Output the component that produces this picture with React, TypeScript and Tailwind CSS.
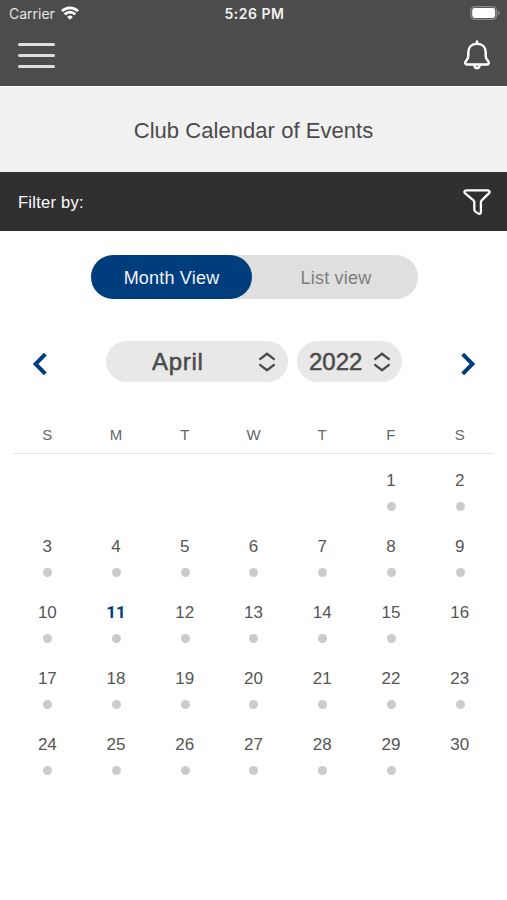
import React, { useState } from 'react';

type CalendarView = 'month' | 'list';

const WEEKDAYS = ['S', 'M', 'T', 'W', 'T', 'F', 'S'];
const FIRST_WEEKDAY = 5;
const DAYS_IN_MONTH = 30;
const TODAY = 11;
const DAYS_WITHOUT_EVENTS = [16, 30];

const StatusBar: React.FC = () => (
  <div className="grid h-7 grid-cols-3 items-center pl-[9px] pr-[7px] font-['Inter',sans-serif] leading-none text-[#e6e6e6]">
    <div className="flex items-center gap-[6px]">
      <span className="text-sm">Carrier</span>
      <svg className="-mt-0.5" width="18" height="14" viewBox="0 0 18 14" fill="none" stroke="#fff" strokeWidth="2.7">
        <path d="M1 5.1a11.4 11.4 0 0 1 16 0" />
        <path d="M3.7 8.4a7.4 7.4 0 0 1 10.6 0" />
        <path d="M6.2 10.9a4 4 0 0 1 5.6 0L9 13.8z" fill="#fff" stroke="none" />
      </svg>
    </div>
    <span className="text-center text-sm font-semibold leading-none tracking-[0.5px] text-[#f2f2f2]">5:26 PM</span>
    <svg className="-mt-0.5 ml-auto" width="30" height="14" viewBox="0 0 30 14" fill="none">
      <rect x="0.8" y="0.6" width="25.8" height="12.8" rx="4" stroke="#8b8b8b" strokeWidth="1.2" />
      <rect x="2.2" y="2" width="23" height="10" rx="2.4" fill="#fff" />
      <path d="M28 4.8c1.2.3 1.7 1.2 1.7 2.2s-.5 1.9-1.7 2.2z" fill="#8b8b8b" />
    </svg>
  </div>
);

const SortArrows: React.FC = () => (
  <svg width="18" height="20" viewBox="0 0 18 20" fill="none" stroke="#4a4a4a" strokeWidth="2.3">
    <path d="M1.4 7.6 9 1.8l7.6 5.8M1.4 12.4 9 18.2l7.6-5.8" />
  </svg>
);

const App: React.FC = () => {
  const [view, setView] = useState<CalendarView>('month');

  const cells: (number | null)[] = [
    ...Array(FIRST_WEEKDAY).fill(null),
    ...Array.from({ length: DAYS_IN_MONTH }, (_, i) => i + 1)
  ];

  return (
    <div className="min-h-screen w-full bg-white font-['Liberation_Sans',Arial,sans-serif] text-[#4a4a4a]">
      <header className="h-[86px] bg-[#4c4c4c]">
        <StatusBar />
        <div className="flex h-[56px] items-center justify-between pl-[18px] pr-4">
          <button aria-label="Menu" className="-mt-px flex w-[37px] flex-col gap-2">
            <span className="h-[3px] rounded-full bg-[#dedede]" />
            <span className="h-[3px] rounded-full bg-[#dedede]" />
            <span className="h-[3px] rounded-full bg-[#dedede]" />
          </button>
          <button aria-label="Notifications" className="-mt-0.5">
            <svg width="28" height="30" viewBox="0 0 28 30" fill="none" stroke="#fff" strokeWidth="2.5" strokeLinecap="round" strokeLinejoin="round">
              <path d="M14 1.6v2" />
              <path d="M14 3.8c-5.300 0-8.700 3.500-8.700 8.400v3.600c0 2.200-.7 3.600-2.200 5.100-1.500 1.500-1 3.700 1 3.700h19.800c2 0 2.500-2.200 1-3.700-1.500-1.500-2.200-2.900-2.200-5.100v-3.600c0-4.900-3.400-8.400-8.700-8.400z" />
              <path d="M11.500 25c0 4.200 5 4.200 5 0" />
            </svg>
          </button>
        </div>
      </header>

      <div className="flex h-[86px] items-center justify-center border-t border-white bg-[#f1f1f1] pt-[2px]">
        <h1 className="text-[22px] leading-none tracking-[0.05px]">Club Calendar of Events</h1>
      </div>

      <div className="flex h-[59px] items-center justify-between bg-[#303030] pl-[18px] pr-4 text-white">
        <span className="pt-0.5 text-[16.5px] tracking-[0.25px]">Filter by:</span>
        <button aria-label="Filter">
          <svg width="28" height="28" viewBox="0 0 28 28" fill="none" stroke="#fff" strokeWidth="2.3" strokeLinejoin="round">
            <path d="M3.400 2.400h21.200c2 0 2.600 1.700 1.200 3l-7.100 7c-.5.5-.8 1-.8 1.700v10c0 1.500-1.200 2.200-2.500 1.500l-2.700-1.700c-.9-.6-1.400-1.300-1.400-2.300v-7.500c0-.7-.3-1.200-.8-1.700l-8.300-7C.8 4.100 1.400 2.400 3.400 2.400z" />
          </svg>
        </button>
      </div>

      <main className="flex flex-col pt-6">
        <div className="mx-auto flex h-11 w-[327px] translate-x-[1px] rounded-full bg-[#dfdfdf] text-[18px]">
          <button
            onClick={() => setView('month')}
            className={`w-[161px] rounded-full pt-0.5 tracking-[0.2px] ${view === 'month' ? 'bg-[#003d7d] text-[#f0f4f8]' : 'text-[#7d7d7d]'}`}
          >
            Month View
          </button>
          <button
            onClick={() => setView('list')}
            className={`flex-1 rounded-full pl-0.5 pt-0.5 tracking-[0.2px] ${view === 'list' ? 'bg-[#003d7d] text-[#f0f4f8]' : 'text-[#7d7d7d]'}`}
          >
            List view
          </button>
        </div>

        <div className="mt-[42px] flex h-[41px] items-center justify-between pl-[32px] pr-[31px]">
          <button aria-label="Previous month" className="pt-1">
            <svg width="16" height="24" viewBox="0 0 16 24" fill="none" stroke="#003d7d" strokeWidth="4">
              <path d="M13.3 2.2 3.6 12l9.7 9.8" />
            </svg>
          </button>
          <div className="flex h-full gap-[9px] text-2xl [-webkit-text-stroke:0.5px_#4a4a4a]">
            <button className="flex w-[182px] items-center justify-between rounded-full bg-[#e8e8e8] pl-[46px] pr-[12px]">
              <span className="tracking-[0.7px]">April</span>
              <SortArrows />
            </button>
            <button className="flex w-[105px] items-center justify-between rounded-full bg-[#e8e8e8] pl-[12px] pr-[11px]">
              <span>2022</span>
              <SortArrows />
            </button>
          </div>
          <button aria-label="Next month" className="pt-1">
            <svg width="16" height="24" viewBox="0 0 16 24" fill="none" stroke="#003d7d" strokeWidth="4">
              <path d="M2.7 2.2 12.4 12l-9.7 9.8" />
            </svg>
          </button>
        </div>

        <div className="ml-[13px] mr-[13px] mt-[41px]">
          <div className="grid h-[31px] grid-cols-7 border-b border-[#e4e4e4] pt-0.5 text-center text-[15px] leading-5 text-[#666]">
            {WEEKDAYS.map((day, i) => (
              <span key={i}>{day}</span>
            ))}
          </div>
          <div className="grid grid-cols-7 pt-4">
            {cells.map((day, i) => (
              <div key={i} className="flex h-[66px] flex-col items-center">
                {day !== null && (
                  <span className={`h-[22px] text-[17px] leading-[22px] ${day === TODAY ? "-mt-px mb-px font-['Roboto',sans-serif] font-bold text-[#003d7d]" : 'text-[#555]'}`}>
                    {day}
                  </span>
                )}
                {day !== null && !DAYS_WITHOUT_EVENTS.includes(day) && (
                  <span className="ml-px mt-[10px] size-[9px] rounded-full bg-[#cbcbcb]" />
                )}
              </div>
            ))}
          </div>
        </div>
      </main>
    </div>
  );
};

export default App;
